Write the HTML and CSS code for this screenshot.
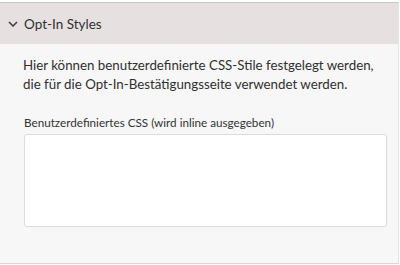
FILE: index.html
```html
<!DOCTYPE html>
<html lang="de">
<head>
    <meta charset="UTF-8">
    <meta name="viewport" content="width=device-width, initial-scale=1.0">
    <title>Opt-In Styles</title>
    <link rel="stylesheet" href="styles.css">
</head>
<body>

    <div class="panel">
        <div class="panel-header">
            <svg class="chevron" width="10" height="6" viewBox="0 0 10 6">
                <path d="M1 1 L5 5 L9 1" fill="none" stroke="#3c3c3c" stroke-width="1.5"/>
            </svg>
            <span class="panel-title">Opt-In Styles</span>
        </div>
        <div class="panel-body">
            <p class="intro">Hier können benutzerdefinierte CSS-Stile festgelegt werden, die für die Opt-In-Bestätigungsseite verwendet werden.</p>
            <label class="field-label" for="customCss">Benutzerdefiniertes CSS (wird inline ausgegeben)</label>
            <textarea id="customCss" class="css-input"></textarea>
        </div>
    </div>

</body>
</html>
```

FILE: styles.css
```css
body {
    margin: 0;
    padding-top: 2px;
    font-family: Lato, Arial, sans-serif;
    color: #333;
    background: #fff;
}

.panel {
    width: 398px;
    border-top: 1px solid #ccc5c4;
    border-right: 1px solid #e4e4e4;
    border-bottom: 1px solid #dcd6d5;
    background: #f7f7f7;
}

.panel-header {
    height: 41px;
    display: flex;
    align-items: center;
    background: #e6e1e0;
    padding-left: 8px;
}

.chevron {
    margin-right: 6px;
}

.panel-title {
    font-size: 13.5px;
    color: #2f2f2f;
}

.panel-body {
    padding: 12px 6px 36px 23px;
}

.intro {
    margin: 0 0 21px;
    font-size: 13.3px;
    line-height: 19px;
    color: #2f2f2f;
}

.field-label {
    display: block;
    margin-left: 1px;
    margin-bottom: 5px;
    font-size: 11.7px;
    color: #333;
}

.css-input {
    display: block;
    box-sizing: border-box;
    width: 363px;
    height: 93px;
    margin-left: 1px;
    border: 1px solid #dcdcdc;
    border-radius: 3px;
    background: #fff;
    resize: none;
}
```
